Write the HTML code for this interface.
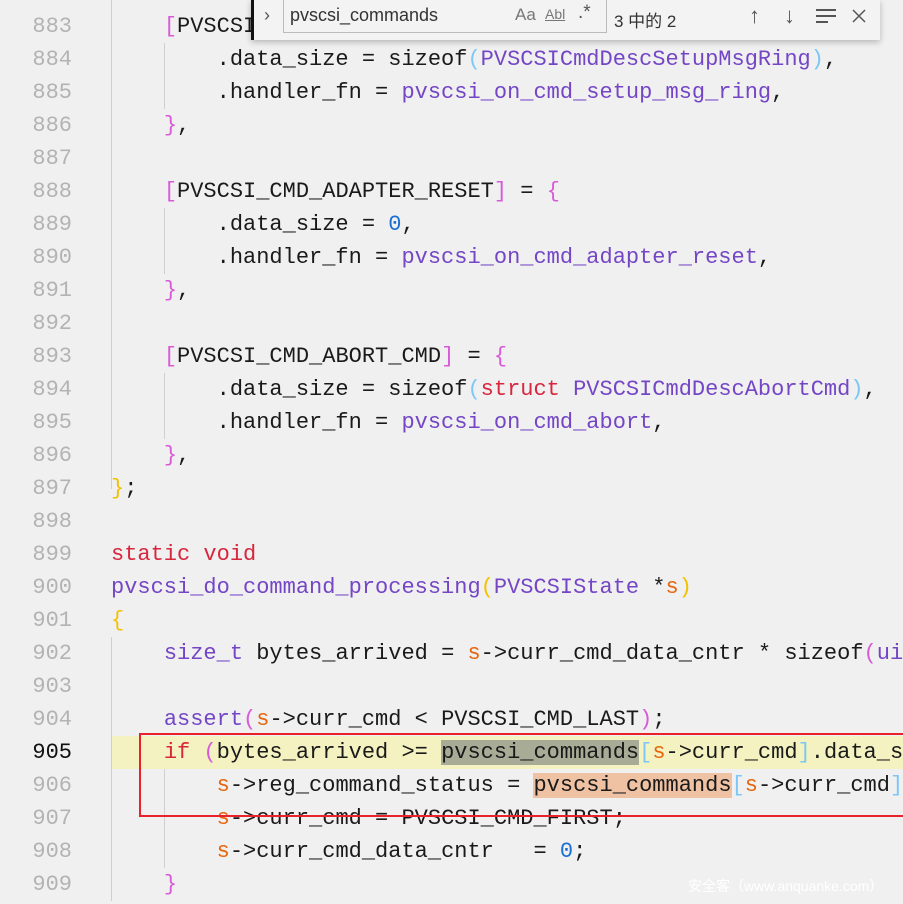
<!DOCTYPE html>
<html><head><meta charset="utf-8"><style>
html,body{margin:0;width:903px;height:904px;overflow:hidden;}
body{background:#f0f0f0;position:relative;font-family:"Liberation Mono",monospace;font-size:22px;}
#wrap{position:absolute;left:0;top:0;width:903px;height:904px;overflow:hidden;}
.ln{position:absolute;left:0;width:72px;text-align:right;color:#b3b3b3;height:33px;line-height:33px;}
.c{position:absolute;left:111px;height:33px;line-height:33px;white-space:pre;color:#1a1a1a;}
.k{color:#d7263d}.f{color:#7446c6}.s{color:#e5660f}.n{color:#1a6fd6}
.p1{color:#f2c200}.p2{color:#d85ad8}.p3{color:#7cc7f5}
.g{position:absolute;width:1px;background:#cfcfcf;}
</style></head><body><div id="wrap">
<div style="position:absolute;left:111px;top:736px;width:792px;height:33px;background:#f3f2c0"></div>
<div class="g" style="left:111px;top:0;height:489px"></div>
<div class="g" style="left:164px;top:43px;height:66px"></div>
<div class="g" style="left:164px;top:208px;height:66px"></div>
<div class="g" style="left:164px;top:373px;height:66px"></div>
<div class="g" style="left:111px;top:637px;height:264px"></div>
<div class="g" style="left:164px;top:769px;height:99px"></div>

<div class="ln" style="top:-23px">882</div>
<div class="ln" style="top:10px">883</div><div class="c" style="top:10px">    <span class="p2">[</span>PVSCSI_CMD_SETUP_MSG_RING<span class="p2">]</span> = <span class="p2">{</span></div>
<div class="ln" style="top:43px">884</div><div class="c" style="top:43px">        .data_size = sizeof<span class="p3">(</span><span class="f">PVSCSICmdDescSetupMsgRing</span><span class="p3">)</span>,</div>
<div class="ln" style="top:76px">885</div><div class="c" style="top:76px">        .handler_fn = <span class="f">pvscsi_on_cmd_setup_msg_ring</span>,</div>
<div class="ln" style="top:109px">886</div><div class="c" style="top:109px">    <span class="p2">}</span>,</div>
<div class="ln" style="top:142px">887</div>
<div class="ln" style="top:175px">888</div><div class="c" style="top:175px">    <span class="p2">[</span>PVSCSI_CMD_ADAPTER_RESET<span class="p2">]</span> = <span class="p2">{</span></div>
<div class="ln" style="top:208px">889</div><div class="c" style="top:208px">        .data_size = <span class="n">0</span>,</div>
<div class="ln" style="top:241px">890</div><div class="c" style="top:241px">        .handler_fn = <span class="f">pvscsi_on_cmd_adapter_reset</span>,</div>
<div class="ln" style="top:274px">891</div><div class="c" style="top:274px">    <span class="p2">}</span>,</div>
<div class="ln" style="top:307px">892</div>
<div class="ln" style="top:340px">893</div><div class="c" style="top:340px">    <span class="p2">[</span>PVSCSI_CMD_ABORT_CMD<span class="p2">]</span> = <span class="p2">{</span></div>
<div class="ln" style="top:373px">894</div><div class="c" style="top:373px">        .data_size = sizeof<span class="p3">(</span><span class="k">struct</span> <span class="f">PVSCSICmdDescAbortCmd</span><span class="p3">)</span>,</div>
<div class="ln" style="top:406px">895</div><div class="c" style="top:406px">        .handler_fn = <span class="f">pvscsi_on_cmd_abort</span>,</div>
<div class="ln" style="top:439px">896</div><div class="c" style="top:439px">    <span class="p2">}</span>,</div>
<div class="ln" style="top:472px">897</div><div class="c" style="top:472px"><span class="p1">}</span>;</div>
<div class="ln" style="top:505px">898</div>
<div class="ln" style="top:538px">899</div><div class="c" style="top:538px"><span class="k">static</span> <span class="k">void</span></div>
<div class="ln" style="top:571px">900</div><div class="c" style="top:571px"><span class="f">pvscsi_do_command_processing</span><span class="p1">(</span><span class="f">PVSCSIState</span> *<span class="s">s</span><span class="p1">)</span></div>
<div class="ln" style="top:604px">901</div><div class="c" style="top:604px"><span class="p1">{</span></div>
<div class="ln" style="top:637px">902</div><div class="c" style="top:637px">    <span class="f">size_t</span> bytes_arrived = <span class="s">s</span>-&gt;curr_cmd_data_cntr * sizeof<span class="p2">(</span><span class="f">ui</span></div>
<div class="ln" style="top:670px">903</div>
<div class="ln" style="top:703px">904</div><div class="c" style="top:703px">    <span class="f">assert</span><span class="p2">(</span><span class="s">s</span>-&gt;curr_cmd &lt; PVSCSI_CMD_LAST<span class="p2">)</span>;</div>
<div class="ln" style="top:736px;color:#111">905</div><div class="c" style="top:736px">    <span class="k">if</span> <span class="p2">(</span>bytes_arrived &gt;= <span style="background:#a8ab96">pvscsi_commands</span><span class="p3">[</span><span class="s">s</span>-&gt;curr_cmd<span class="p3">]</span>.data_s</div>
<div class="ln" style="top:769px">906</div><div class="c" style="top:769px">        <span class="s">s</span>-&gt;reg_command_status = <span style="background:#efc2a4">pvscsi_commands</span><span class="p3">[</span><span class="s">s</span>-&gt;curr_cmd<span class="p3">]</span></div>
<div class="ln" style="top:802px">907</div><div class="c" style="top:802px">        <span class="s">s</span>-&gt;curr_cmd = PVSCSI_CMD_FIRST;</div>
<div class="ln" style="top:835px">908</div><div class="c" style="top:835px">        <span class="s">s</span>-&gt;curr_cmd_data_cntr   = <span class="n">0</span>;</div>
<div class="ln" style="top:868px">909</div><div class="c" style="top:868px">    <span class="p2">}</span></div>

<div style="position:absolute;left:139px;top:733px;width:770px;height:80px;border:2px solid #e8212b;"></div>

<div style="position:absolute;left:251px;top:0;width:626px;height:40px;background:#f3f3f3;box-shadow:0 2px 6px rgba(0,0,0,.25);border-left:3px solid #111;font-family:'Liberation Sans','Noto Sans CJK SC',sans-serif;">
  <div style="position:absolute;left:10px;top:5px;font-size:18px;color:#555">&#x203A;</div>
  <div style="position:absolute;left:29px;top:-1px;width:322px;height:32px;border:1px solid #bbb;background:#f3f3f3;">
    <span style="position:absolute;left:6px;top:5px;font-size:18px;color:#333">pvscsi_commands</span>
    <span style="position:absolute;left:231px;top:5px;font-size:17px;color:#777">Aa</span>
    <span style="position:absolute;left:261px;top:6px;font-size:14px;color:#777;text-decoration:underline">Abl</span>
    <span style="position:absolute;left:294px;top:2px;font-size:19px;color:#555">.*</span>
  </div>
  <div style="position:absolute;left:360px;top:7px;font-size:17px;color:#333">3 中的 2</div>
  <div style="position:absolute;left:495px;top:3px;font-size:22px;color:#555">&#x2191;</div>
  <div style="position:absolute;left:530px;top:3px;font-size:22px;color:#555">&#x2193;</div>
  <div style="position:absolute;left:562px;top:9px;width:20px;height:2px;background:#555;box-shadow:0 6px 0 #555"></div>
  <div style="position:absolute;left:562px;top:21px;width:12px;height:2px;background:#555"></div>
  <svg style="position:absolute;left:598px;top:9px" width="14" height="14"><path d="M1 1L13 13M13 1L1 13" stroke="#555" stroke-width="1.5"/></svg>
</div>
<div style="position:absolute;left:688px;top:876px;font-family:'Liberation Sans','Noto Sans CJK SC',sans-serif;font-size:14px;color:#fff">安全客（www.anquanke.com）</div>
</div></body></html>
